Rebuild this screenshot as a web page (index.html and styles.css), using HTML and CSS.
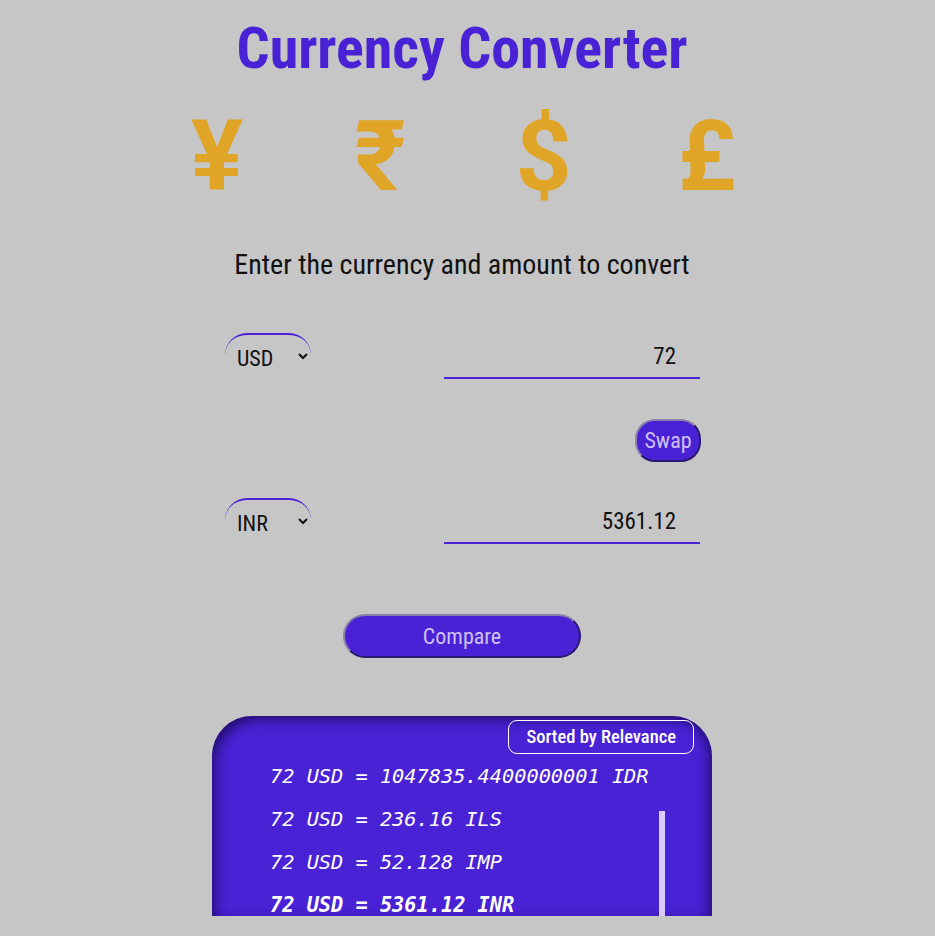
FILE: index.html
```html
<!DOCTYPE html>
<html>
<head>
<meta charset="utf-8">
<link rel="stylesheet" href="styles.css">
</head>
<body>
<main class="app">
  <h1 class="title">Currency Converter</h1>
  <div class="symbols">
    <span class="sym">¥</span>
    <span class="sym">₹</span>
    <span class="sym">$</span>
    <span class="sym">£</span>
  </div>
  <p class="lead">Enter the currency and amount to convert</p>
  <div class="row">
    <select class="cur"><option>USD</option></select>
    <input class="amt" type="text" value="72">
  </div>
  <div class="swap-row">
    <button class="swap">Swap</button>
  </div>
  <div class="row">
    <select class="cur"><option>INR</option></select>
    <input class="amt" type="text" value="5361.12">
  </div>
  <div class="compare-row">
    <button class="compare">Compare</button>
  </div>
  <section class="results">
    <div class="results-head">
      <span class="sorted">Sorted by Relevance</span>
    </div>
    <ul class="list">
      <li>72 USD = 1047835.4400000001 IDR</li>
      <li>72 USD = 236.16 ILS</li>
      <li>72 USD = 52.128 IMP</li>
      <li class="active">72 USD = 5361.12 INR</li>
    </ul>
    <span class="bar"></span>
  </section>
</main>
</body>
</html>
```
FILE: styles.css
```css
html, body {
  margin: 0;
  padding: 0;
  background: #c6c6c6;
  height: 100%;
  overflow: hidden;
}
body {
  padding-right: 11px;
  font-family: Roboto, "Liberation Sans", sans-serif;
  font-stretch: condensed;
}
.app {
  width: 500px;
  margin: 0 auto;
  display: flex;
  flex-direction: column;
}
.title {
  margin: 12px 0 0;
  font-size: 58px;
  line-height: 72px;
  font-weight: 700;
  color: #4a22d6;
  text-align: center;
}
.symbols {
  display: flex;
  justify-content: space-between;
  margin: 18px -45px 0;
}
.sym {
  width: 100px;
  text-align: center;
  font-size: 98px;
  line-height: 110px;
  font-weight: 700;
  color: #e0a526;
  font-family: Roboto, "Noto Sans", sans-serif;
  font-stretch: normal;
}
.lead {
  margin: 37px 0 0;
  text-align: center;
  font-size: 28px;
  line-height: 32px;
  color: #111;
}
.row {
  display: flex;
  justify-content: space-between;
  align-items: flex-end;
  padding: 0 12px 0 13px;
  margin-top: 52px;
}
.row + .swap-row + .row { margin-top: 36px; }
.cur {
  width: 86px;
  height: 46px;
  border: none;
  border-top: 2px solid #4a22d6;
  border-radius: 22px;
  background: transparent;
  font-family: Roboto, sans-serif;
  font-stretch: condensed;
  font-size: 22px;
  color: #111;
  padding: 2px 0 0 8px;
}
.amt {
  width: 256px;
  height: 40px;
  box-sizing: border-box;
  border: none;
  border-bottom: 2px solid #4a22d6;
  background: transparent;
  text-align: right;
  padding: 0 24px 4px 0;
  font-family: Roboto, sans-serif;
  font-stretch: condensed;
  font-size: 23px;
  color: #111;
  outline: none;
}
.swap-row {
  display: flex;
  justify-content: flex-end;
  padding-right: 11px;
  margin-top: 40px;
}
.swap, .compare {
  background: #4a22d6;
  color: #cfc0f5;
  font-family: Roboto, sans-serif;
  font-stretch: condensed;
  font-size: 22px;
  border: 2px solid;
  border-color: #8a80a8 #2a1870 #2a1870 #8a80a8;
}
.swap {
  width: 66px;
  height: 43px;
  border-radius: 20px;
  padding: 0;
}
.compare-row {
  display: flex;
  justify-content: center;
  margin-top: 70px;
}
.compare {
  width: 238px;
  height: 44px;
  border-radius: 22px;
}
.results {
  position: relative;
  margin-top: 58px;
  height: 200px;
  background: #4a22d6;
  border-radius: 40px 40px 0 0;
  box-shadow: inset 8px 8px 14px -6px rgba(20, 8, 70, 0.8), inset -8px 0 14px -6px rgba(20, 8, 70, 0.8);
  overflow: hidden;
}
.results-head {
  display: flex;
  justify-content: flex-end;
  padding: 4px 18px 0 0;
}
.sorted {
  border: 1px solid #fff;
  border-radius: 9px;
  color: #fff;
  font-size: 18.5px;
  font-weight: 500;
  line-height: 32px;
  padding: 0 17px;
}
.list {
  list-style: none;
  margin: 0;
  padding: 1px 0 0 58px;
}
.list li {
  font-family: "DejaVu Sans Mono", monospace;
  font-style: italic;
  font-size: 20.3px;
  line-height: 43px;
  color: #fff;
}
.list li.active { font-weight: 700; }
.bar {
  position: absolute;
  left: 447px;
  top: 95px;
  width: 6px;
  bottom: 0;
  background: #d8ccff;
}
```
